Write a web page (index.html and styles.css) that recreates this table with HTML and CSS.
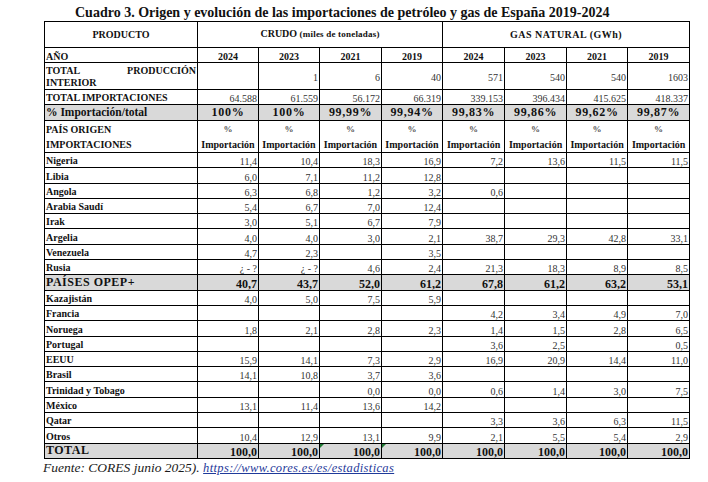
FILE: index.html
```html
<!DOCTYPE html>
<html lang="es">
<head>
<meta charset="utf-8">
<title>Cuadro 3</title>
<link rel="stylesheet" href="styles.css">
</head>
<body>
<div class="page">
  <h1 class="title">Cuadro 3. Origen y evolución de las importaciones de petróleo y gas de España 2019-2024</h1>
  <table class="tbl">
    <colgroup>
      <col class="c-lab"><col class="c61"><col class="c61"><col class="c62"><col class="c61"><col class="c62"><col class="c62"><col class="c61"><col class="c62">
    </colgroup>
    <tbody>
      <tr class="r-prod">
        <td class="hd ctr">PRODUCTO</td>
        <td class="hd ctr" colspan="4">CRUDO <span class="sub">(miles de toneladas)</span></td>
        <td class="hd ctr gas" colspan="4">GAS NATURAL (GWh)</td>
      </tr>
      <tr class="r15">
        <td class="lab yrow">AÑO</td>
        <td class="yr">2024</td><td class="yr">2023</td><td class="yr">2021</td><td class="yr">2019</td>
        <td class="yr">2024</td><td class="yr">2023</td><td class="yr">2021</td><td class="yr">2019</td>
      </tr>
      <tr class="r-int">
        <td class="lab just">TOTAL PRODUCCIÓN INTERIOR</td>
        <td class="mid"></td><td class="mid">1</td><td class="mid">6</td><td class="mid">40</td>
        <td class="mid">571</td><td class="mid">540</td><td class="mid">540</td><td class="mid">1603</td>
      </tr>
      <tr class="r15">
        <td class="lab">TOTAL IMPORTACIONES</td>
        <td class="num">64.588</td><td class="num">61.559</td><td class="num">56.172</td><td class="num">66.319</td>
        <td class="num">339.153</td><td class="num">396.434</td><td class="num">415.625</td><td class="num">418.337</td>
      </tr>
      <tr class="r16 gray">
        <td class="big pcl">% Importación/total</td>
        <td class="pct">100%</td><td class="pct">100%</td><td class="pct">99,99%</td><td class="pct">99,94%</td>
        <td class="pct">99,83%</td><td class="pct">99,86%</td><td class="pct">99,62%</td><td class="pct">99,87%</td>
      </tr>
      <tr class="r-pais">
        <td class="lab two">PAÍS ORIGEN<br>IMPORTACIONES</td>
        <td class="imp"><span class="p">%</span><br>Importación</td>
        <td class="imp"><span class="p">%</span><br>Importación</td>
        <td class="imp"><span class="p">%</span><br>Importación</td>
        <td class="imp"><span class="p">%</span><br>Importación</td>
        <td class="imp"><span class="p">%</span><br>Importación</td>
        <td class="imp"><span class="p">%</span><br>Importación</td>
        <td class="imp"><span class="p">%</span><br>Importación</td>
        <td class="imp"><span class="p">%</span><br>Importación</td>
      </tr>
      <tr class="rb"><td class="lab">Nigeria</td><td class="num">11,4</td><td class="num">10,4</td><td class="num">18,3</td><td class="num">16,9</td><td class="num">7,2</td><td class="num">13,6</td><td class="num">11,5</td><td class="num">11,5</td></tr>
      <tr class="rb"><td class="lab">Libia</td><td class="num">6,0</td><td class="num">7,1</td><td class="num">11,2</td><td class="num">12,8</td><td class="num"></td><td class="num"></td><td class="num"></td><td class="num"></td></tr>
      <tr class="rb"><td class="lab">Angola</td><td class="num">6,3</td><td class="num">6,8</td><td class="num">1,2</td><td class="num">3,2</td><td class="num">0,6</td><td class="num"></td><td class="num"></td><td class="num"></td></tr>
      <tr class="rb"><td class="lab">Arabia Saudí</td><td class="num">5,4</td><td class="num">6,7</td><td class="num">7,0</td><td class="num">12,4</td><td class="num"></td><td class="num"></td><td class="num"></td><td class="num"></td></tr>
      <tr class="rb"><td class="lab">Irak</td><td class="num">3,0</td><td class="num">5,1</td><td class="num">6,7</td><td class="num">7,9</td><td class="num"></td><td class="num"></td><td class="num"></td><td class="num"></td></tr>
      <tr class="rb"><td class="lab">Argelia</td><td class="num">4,0</td><td class="num">4,0</td><td class="num">3,0</td><td class="num">2,1</td><td class="num">38,7</td><td class="num">29,3</td><td class="num">42,8</td><td class="num">33,1</td></tr>
      <tr class="rb"><td class="lab">Venezuela</td><td class="num">4,7</td><td class="num">2,3</td><td class="num"></td><td class="num">3,5</td><td class="num"></td><td class="num"></td><td class="num"></td><td class="num"></td></tr>
      <tr class="rb"><td class="lab">Rusia</td><td class="num">¿ - ?</td><td class="num">¿ - ?</td><td class="num">4,6</td><td class="num">2,4</td><td class="num">21,3</td><td class="num">18,3</td><td class="num">8,9</td><td class="num">8,5</td></tr>
      <tr class="rb gray"><td class="big sp">PAÍSES OPEP+</td><td class="bnum">40,7</td><td class="bnum">43,7</td><td class="bnum">52,0</td><td class="bnum">61,2</td><td class="bnum">67,8</td><td class="bnum">61,2</td><td class="bnum">63,2</td><td class="bnum">53,1</td></tr>
      <tr class="rb"><td class="lab">Kazajistán</td><td class="num">4,0</td><td class="num">5,0</td><td class="num">7,5</td><td class="num">5,9</td><td class="num"></td><td class="num"></td><td class="num"></td><td class="num"></td></tr>
      <tr class="rb"><td class="lab">Francia</td><td class="num"></td><td class="num"></td><td class="num"></td><td class="num"></td><td class="num">4,2</td><td class="num">3,4</td><td class="num">4,9</td><td class="num">7,0</td></tr>
      <tr class="rb"><td class="lab">Noruega</td><td class="num">1,8</td><td class="num">2,1</td><td class="num">2,8</td><td class="num">2,3</td><td class="num">1,4</td><td class="num">1,5</td><td class="num">2,8</td><td class="num">6,5</td></tr>
      <tr class="rb"><td class="lab">Portugal</td><td class="num"></td><td class="num"></td><td class="num"></td><td class="num"></td><td class="num">3,6</td><td class="num">2,5</td><td class="num"></td><td class="num">0,5</td></tr>
      <tr class="rb"><td class="lab">EEUU</td><td class="num">15,9</td><td class="num">14,1</td><td class="num">7,3</td><td class="num">2,9</td><td class="num">16,9</td><td class="num">20,9</td><td class="num">14,4</td><td class="num">11,0</td></tr>
      <tr class="rb"><td class="lab">Brasil</td><td class="num">14,1</td><td class="num">10,8</td><td class="num">3,7</td><td class="num">3,6</td><td class="num"></td><td class="num"></td><td class="num"></td><td class="num"></td></tr>
      <tr class="rb"><td class="lab">Trinidad y Tobago</td><td class="num"></td><td class="num"></td><td class="num">0,0</td><td class="num">0,0</td><td class="num">0,6</td><td class="num">1,4</td><td class="num">3,0</td><td class="num">7,5</td></tr>
      <tr class="rb"><td class="lab">México</td><td class="num">13,1</td><td class="num">11,4</td><td class="num">13,6</td><td class="num">14,2</td><td class="num"></td><td class="num"></td><td class="num"></td><td class="num"></td></tr>
      <tr class="rb"><td class="lab">Qatar</td><td class="num"></td><td class="num"></td><td class="num"></td><td class="num"></td><td class="num">3,3</td><td class="num">3,6</td><td class="num">6,3</td><td class="num">11,5</td></tr>
      <tr class="rb"><td class="lab">Otros</td><td class="num">10,4</td><td class="num">12,9</td><td class="num">13,1</td><td class="num">9,9</td><td class="num">2,1</td><td class="num">5,5</td><td class="num">5,4</td><td class="num">2,9</td></tr>
      <tr class="rb gray"><td class="big sp">TOTAL</td><td class="bnum">100,0</td><td class="bnum">100,0</td><td class="bnum flag">100,0</td><td class="bnum flag">100,0</td><td class="bnum">100,0</td><td class="bnum">100,0</td><td class="bnum">100,0</td><td class="bnum">100,0</td></tr>
    </tbody>
  </table>
  <p class="source">Fuente: CORES junio 2025). <a class="link" href="#">https://www.cores.es/es/estadisticas</a></p>
</div>
</body>
</html>
```

FILE: styles.css
```css
html, body {
  margin: 0;
  padding: 0;
  background: #ffffff;
}

.page {
  padding-left: 44px;
  font-family: "Liberation Serif", "Times New Roman", serif;
  color: #111111;
}

.title {
  margin: 0;
  padding: 4px 0 0 31px;
  height: 17px;
  font-size: 14px;
  line-height: 17px;
  font-weight: bold;
  white-space: nowrap;
}

.tbl {
  border-collapse: collapse;
  table-layout: fixed;
  width: 646px;
}

.c-lab { width: 153px; }
.c61 { width: 61px; }
.c62 { width: 62px; }

.tbl td {
  border: 1px solid #000000;
  padding: 0 1px;
  font-size: 10px;
  line-height: 11px;
  white-space: nowrap;
  overflow: hidden;
  vertical-align: bottom;
}

.r-prod { height: 26px; }
.r15 { height: 15px; }
.r16 { height: 16px; }
.r-int { height: 27px; }
.r-pais { height: 31px; }
.rb { height: 15.3px; }

.gray td { background: #d9d9d9; }

.tbl td.hd {
  font-weight: bold;
  vertical-align: middle;
  padding-bottom: 1px;
}

.ctr { text-align: center; }

.gas { letter-spacing: 0.5px; }

.sub {
  font-size: 9px;
  letter-spacing: 0.2px;
}

.tbl td.lab {
  font-weight: bold;
  text-align: left;
  padding-bottom: 1px;
}

.tbl td.yrow {
  line-height: 10px;
  padding-bottom: 0;
}

.tbl td.yr {
  font-weight: bold;
  text-align: center;
  line-height: 10px;
}

.tbl td.just {
  white-space: normal;
  text-align: justify;
  text-align-last: left;
  line-height: 12px;
  padding-bottom: 0;
}

.tbl td.mid {
  text-align: right;
  vertical-align: middle;
  padding-top: 3px;
  color: #333333;
}

.tbl td.num {
  text-align: right;
  color: #333333;
  line-height: 10px;
}

.tbl td.big {
  font-size: 12px;
  font-weight: bold;
  line-height: 13px;
  padding-bottom: 1px;
}

.tbl td.pcl { font-size: 11.5px; }

.tbl td.sp { letter-spacing: 0.5px; }

.tbl td.pct {
  font-size: 12px;
  font-weight: bold;
  letter-spacing: 0.7px;
  text-align: center;
  line-height: 13px;
  padding-bottom: 1px;
}

.tbl td.bnum {
  font-size: 12px;
  font-weight: bold;
  text-align: right;
  line-height: 12px;
}

.tbl td.two {
  line-height: 15px;
  vertical-align: middle;
  padding-bottom: 0;
}

.tbl td.imp {
  text-align: center;
  font-weight: bold;
  line-height: 15px;
  vertical-align: middle;
}

.p {
  font-size: 9px;
  color: #555555;
}

.tbl td.flag { position: relative; }

.tbl td.flag::before {
  content: "";
  position: absolute;
  left: 0;
  top: 0;
  border-top: 4px solid #1f7a33;
  border-right: 4px solid transparent;
}

.source {
  margin: 0 0 0 -1px;
  padding-top: 1px;
  font-size: 13.5px;
  line-height: 15px;
  font-style: italic;
  color: #1a1a1a;
  white-space: nowrap;
}

.link {
  color: #1f3a9a;
  text-decoration: underline;
  font-size: 12.5px;
  letter-spacing: 0.35px;
}
```
